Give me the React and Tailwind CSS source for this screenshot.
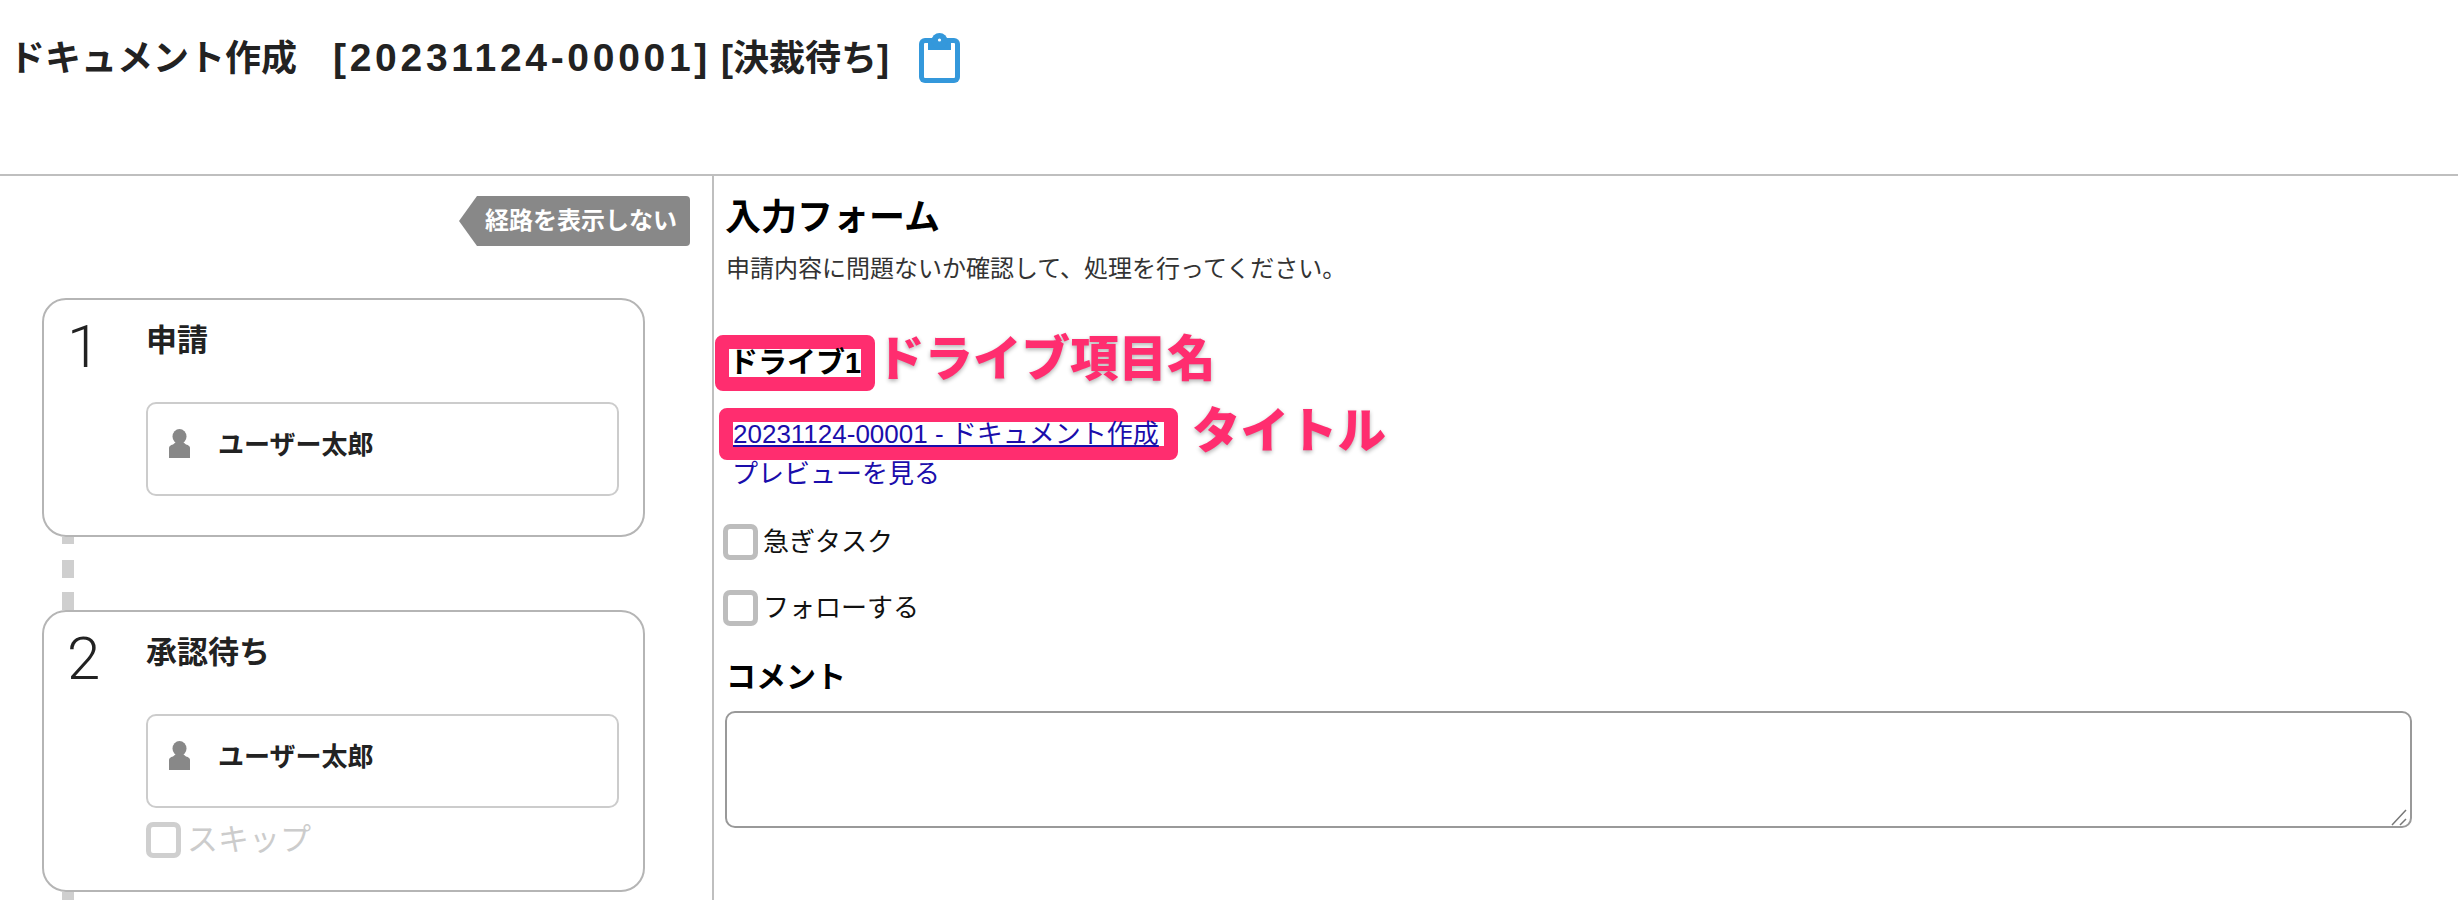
import React from 'react';

const sans = "font-['Liberation_Sans','Noto_Sans_CJK_JP',sans-serif]";

const ClipboardIcon = () => (
    <svg width="41" height="50" viewBox="0 0 41 50" className="ml-[30px]">
        <rect x="0" y="5" width="41" height="45" rx="6" fill="#3498db" />
        <rect x="5" y="10" width="31" height="35" rx="1" fill="#fff" />
        <rect x="9" y="6" width="23" height="11" fill="#3498db" />
        <circle cx="20.5" cy="8" r="8" fill="#3498db" />
        <circle cx="20.5" cy="7" r="1.6" fill="#fff" />
    </svg>
);

const PersonIcon = () => (
    <svg width="21" height="29" viewBox="0 0 21 29" className="shrink-0">
        <ellipse cx="10.5" cy="7.5" rx="7" ry="7.5" fill="#888" />
        <path d="M0 29V19Q0 16.500 4 15.500L7 13H14L17 15.500Q21 16.500 21 19V29Z" fill="#888" />
    </svg>
);

const Checkbox = ({ light = false }) => (
    <span className={`block w-[35px] h-[36px] shrink-0 border-[5px] rounded-[7px] bg-white ${light ? 'border-[#cfcfcf]' : 'border-[#bdbdbd]'}`}></span>
);

const Dash = ({ className = "" }) => <div className={`ml-[62px] w-[12px] bg-[#cfcfcf] ${className}`}></div>;

const StepCard = ({ no, title, className = "", children }) => (
    <div className={`ml-[42px] w-[603px] flex border-2 border-[#b5b5b5] rounded-[24px] bg-white ${className}`}>
        <div className="w-[102px] shrink-0 pl-[23px] pt-[12px] text-[60px] leading-[70px] font-light text-[#222] font-['Roboto',sans-serif]">{no}</div>
        <div className="flex-1 pr-[24px] pt-[21px]">
            <div className="text-[31px] leading-[40px] font-bold text-[#222]">{title}</div>
            <div className="mt-[41px] h-[94px] flex items-start gap-[28px] pl-[21px] pt-[25px] border-2 border-[#cccccc] rounded-[10px]">
                <PersonIcon />
                <span className="text-[26px] leading-[36px] font-bold text-[#222] -mt-[2px]">ユーザー太郎</span>
            </div>
            {children}
        </div>
    </div>
);

const Annotation = ({ className = "", children }) => (
    <span className={`absolute whitespace-nowrap text-[48.5px] leading-[48px] font-black text-[#ff2d6f] [-webkit-text-stroke:6px_white] [paint-order:stroke_fill] [text-shadow:0_2px_4px_rgba(0,0,0,0.3)] ${className}`}>{children}</span>
);

const App = () => {
    return (
        <div className={`w-[2458px] h-[900px] overflow-hidden bg-white flex flex-col ${sans}`}>
            <header className="h-[176px] shrink-0 border-b-2 border-[#bfbfbf] flex items-start pl-[9px] pt-[33px]">
                <h1 className="text-[36px] leading-[50px] font-bold text-[#222] whitespace-pre">
                    ドキュメント作成{'　'}<span className="text-[39px] tracking-[3.7px]">[20231124-00001]</span> [決裁待ち]
                </h1>
                <ClipboardIcon />
            </header>
            <div className="flex flex-1 min-h-0">
                <aside className="w-[714px] shrink-0 border-r-2 border-[#bfbfbf] flex flex-col">
                    <div className="self-end mr-[22px] mt-[20px] w-[231px] h-[50px] flex items-center justify-end pr-[13px] bg-[#888888] rounded-r-[4px] [clip-path:polygon(18px_0,100%_0,100%_100%,18px_100%,0_50%)] text-[24px] font-bold text-white">
                        経路を表示しない
                    </div>
                    <StepCard no="1" title="申請" className="mt-[52px] h-[239px]" />
                    <Dash className="h-[7px]" />
                    <Dash className="h-[18px] mt-[16px]" />
                    <Dash className="h-[18px] mt-[14px]" />
                    <StepCard no="2" title="承認待ち" className="h-[282px]">
                        <div className="mt-[14px] flex items-center gap-[6px]">
                            <Checkbox light />
                            <span className="text-[31px] leading-[36px] text-[#cccccc]">スキップ</span>
                        </div>
                    </StepCard>
                    <Dash className="h-[8px]" />
                </aside>
                <main className="flex-1 min-w-0 pl-[13px] pt-[20px]">
                    <h2 className="-ml-[2px] text-[36px] leading-[44px] font-bold text-black">入力フォーム</h2>
                    <p className="-ml-[1px] mt-[11px] text-[24px] leading-[36px] text-[#333]">申請内容に問題ないか確認して、処理を行ってください。</p>

                    <div className="relative mt-[48px] -ml-[12px] w-fit border-[14px] border-[#ff2d6f] rounded-[8px] bg-white">
                        <div className="text-[29px] leading-[28px] font-bold text-black whitespace-nowrap">ドライブ1</div>
                        <Annotation className="left-[147px] -top-[14px]">ドライブ項目名</Annotation>
                    </div>

                    <div className="relative mt-[17px] -ml-[8px] w-fit border-[14px] border-[#ff2d6f] rounded-[8px] bg-white pr-[5px]">
                        <a href="#" className="block text-[26px] leading-[24px] text-[#1a0dab] underline whitespace-nowrap">20231124-00001 - ドキュメント作成</a>
                        <Annotation className="left-[459px] -top-[15px]">タイトル</Annotation>
                    </div>
                    <a href="#" className="block ml-[5px] text-[26px] leading-[28px] text-[#1a0dab]">プレビューを見る</a>

                    <div className="mt-[36px] -ml-[4px] flex items-center gap-[5px]">
                        <Checkbox />
                        <span className="text-[26px] leading-[36px] text-[#111]">急ぎタスク</span>
                    </div>
                    <div className="mt-[30px] -ml-[4px] flex items-center gap-[5px]">
                        <Checkbox />
                        <span className="text-[26px] leading-[36px] text-[#111]">フォローする</span>
                    </div>

                    <h3 className="mt-[31px] -ml-[1px] text-[30px] leading-[40px] font-bold text-black">コメント</h3>
                    <div className="relative mt-[14px] -ml-[2px] w-[1687px] h-[117px]">
                        <textarea className="block w-full h-full resize-none border-2 border-[#999999] rounded-[10px] bg-white"></textarea>
                        <svg width="18" height="18" viewBox="0 0 18 18" className="absolute right-[3px] bottom-[1px]">
                            <path d="M1 16L15 1M9 16L15 10" stroke="#777" strokeWidth="1.500" fill="none" />
                        </svg>
                    </div>
                </main>
            </div>
        </div>
    );
};

export default App;
